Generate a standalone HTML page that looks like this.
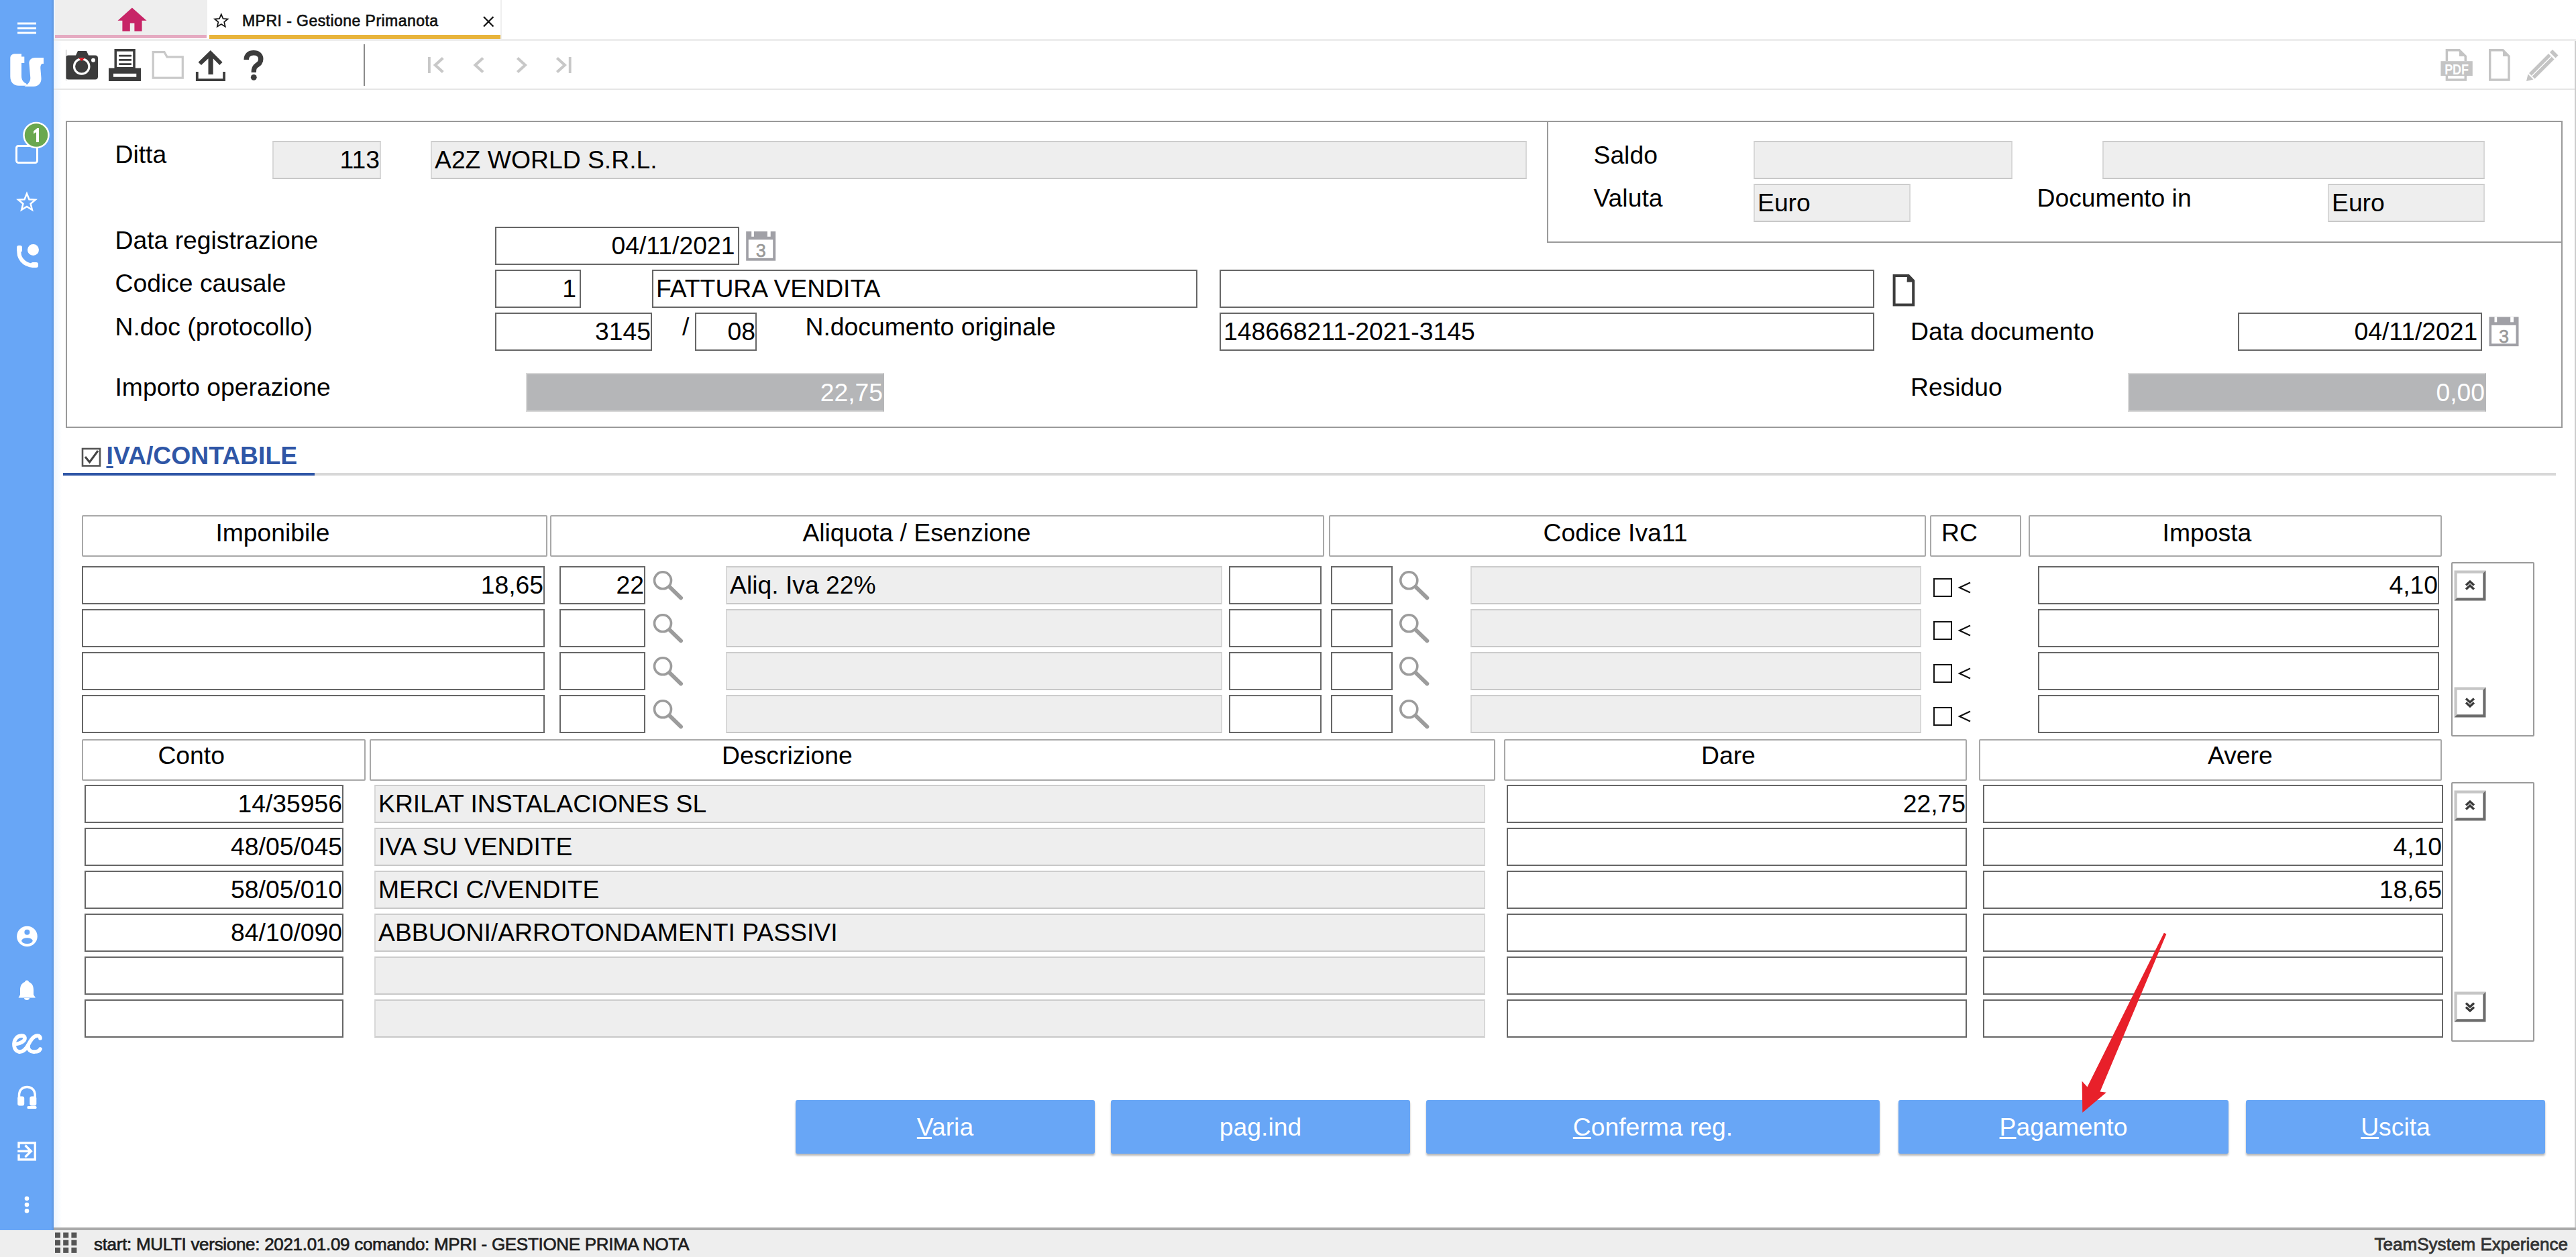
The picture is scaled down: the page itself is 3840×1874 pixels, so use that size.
<!DOCTYPE html><html><head><meta charset="utf-8"><style>
*{margin:0;padding:0;box-sizing:border-box}
html,body{width:3840px;height:1874px;overflow:hidden;background:#fff;font-family:"Liberation Sans",sans-serif;color:#000}
div{position:absolute}
.t{white-space:nowrap}
.fw{background:#fff;border:2px solid #666;font-size:37.3px;white-space:nowrap;overflow:visible}
.fg{background:#eeeeee;border:2px solid;border-color:#cccccc #d8d8d8 #c8c8c8 #d8d8d8;font-size:37.3px;white-space:nowrap}
.fd{background:#b5b6b8;border:2px solid #d6d6d6;border-right-color:#b5b6b8;font-size:37.3px;white-space:nowrap}
.hd{background:#fff;border:2px solid #a8a8a8;border-radius:2px}
.btn{background:#68a6f6;border-radius:3px;box-shadow:0 3px 3px rgba(0,0,0,.28);color:#fff;font-size:37.3px;text-align:center;line-height:80px}
svg{position:absolute;overflow:visible}
</style></head><body><div style="left:0;top:0;width:80px;height:1834px;background:#68a6f6"></div><div style="left:76px;top:0;width:4px;height:1834px;background:linear-gradient(to right,rgba(0,0,0,0),rgba(0,0,0,.10))"></div><div style="left:80px;top:0;width:12px;height:1834px;background:linear-gradient(to right,rgba(104,166,246,.12),rgba(104,166,246,0))"></div><div style="left:82px;top:0;width:227px;height:52px;background:#eeeeee"></div><div style="left:82px;top:52px;width:226px;height:5px;background:#e5aac1"></div><div style="left:312px;top:52px;width:434px;height:6px;background:#e8b43c"></div><div style="left:80px;top:58px;width:3760px;height:3px;background:#ededed"></div><div class="t" style="left:361px;top:17.53px;font-size:23px;line-height:26px;font-weight:400;color:#111;letter-spacing:0.45px;-webkit-text-stroke:0.65px #111">MPRI - Gestione Primanota</div><div style="left:746px;top:0;width:2px;height:58px;background:#efefef"></div><div style="left:80px;top:132px;width:3760px;height:2px;background:#e6e6e6"></div><div style="left:542px;top:66px;width:1.5px;height:62px;background:#8a8a8a"></div><div style="left:3838px;top:61px;width:2px;height:1770px;background:#cccccc"></div><div class="" style="left:98px;top:180px;width:3722px;height:458px;border:2px solid #9a9a9a"></div><div style="left:2306px;top:180px;width:2px;height:182px;background:#9a9a9a"></div><div style="left:2306px;top:360px;width:1514px;height:2px;background:#9a9a9a"></div><div class="t" style="left:171.5px;top:208.58px;font-size:37.3px;line-height:43px;font-weight:400;color:#000;">Ditta</div><div class="t" style="left:171.5px;top:337.08px;font-size:37.3px;line-height:43px;font-weight:400;color:#000;">Data registrazione</div><div class="t" style="left:171.5px;top:401.08px;font-size:37.3px;line-height:43px;font-weight:400;color:#000;">Codice causale</div><div class="t" style="left:171.5px;top:465.58px;font-size:37.3px;line-height:43px;font-weight:400;color:#000;">N.doc (protocollo)</div><div class="t" style="left:171.5px;top:555.58px;font-size:37.3px;line-height:43px;font-weight:400;color:#000;">Importo operazione</div><div class="t" style="left:2375.5px;top:209.58px;font-size:37.3px;line-height:43px;font-weight:400;color:#000;">Saldo</div><div class="t" style="left:2375.5px;top:273.58px;font-size:37.3px;line-height:43px;font-weight:400;color:#000;">Valuta</div><div class="t" style="left:3036.5px;top:273.58px;font-size:37.3px;line-height:43px;font-weight:400;color:#000;">Documento in</div><div class="t" style="left:1200.5px;top:465.58px;font-size:37.3px;line-height:43px;font-weight:400;color:#000;">N.documento originale</div><div class="t" style="left:2848px;top:473.08px;font-size:37.3px;line-height:43px;font-weight:400;color:#000;">Data documento</div><div class="t" style="left:2848px;top:555.58px;font-size:37.3px;line-height:43px;font-weight:400;color:#000;">Residuo</div><div class="t" style="left:1017px;top:465.58px;font-size:37.3px;line-height:43px;font-weight:400;color:#000;">/</div><div class="fg" style="left:406px;top:210px;width:162px;height:57px;"><span style="display:block;line-height:53px;text-align:right;padding:0 0px 0 0;color:#000">113</span></div><div class="fg" style="left:642px;top:210px;width:1634px;height:57px;"><span style="display:block;line-height:53px;text-align:left;padding:0 0 0 4px;color:#000">A2Z WORLD S.R.L.</span></div><div class="fg" style="left:2614px;top:210px;width:386px;height:57px;"></div><div class="fg" style="left:3134px;top:210px;width:570px;height:57px;"></div><div class="fg" style="left:2614px;top:274px;width:234px;height:57px;"><span style="display:block;line-height:53px;text-align:left;padding:0 0 0 4px;color:#000">Euro</span></div><div class="fg" style="left:3470px;top:274px;width:234px;height:57px;"><span style="display:block;line-height:53px;text-align:left;padding:0 0 0 4px;color:#000">Euro</span></div><div class="fw" style="left:738px;top:338px;width:364px;height:57px;"><span style="display:block;line-height:53px;text-align:right;padding:0 4.6px 0 0;color:#000">04/11/2021</span></div><div class="fw" style="left:738px;top:402px;width:128px;height:57px;"><span style="display:block;line-height:53px;text-align:right;padding:0 5px 0 0;color:#000">1</span></div><div class="fw" style="left:972px;top:402px;width:813px;height:57px;"><span style="display:block;line-height:53px;text-align:left;padding:0 0 0 4px;color:#000">FATTURA VENDITA</span></div><div class="fw" style="left:1818px;top:402px;width:976px;height:57px;"></div><div class="fw" style="left:738px;top:466px;width:234px;height:57px;"><span style="display:block;line-height:53px;text-align:right;padding:0 0px 0 0;color:#000">3145</span></div><div class="fw" style="left:1036px;top:466px;width:92px;height:57px;"><span style="display:block;line-height:53px;text-align:right;padding:0 0px 0 0;color:#000">08</span></div><div class="fw" style="left:1818px;top:466px;width:976px;height:57px;"><span style="display:block;line-height:53px;text-align:left;padding:0 0 0 4px;color:#000">148668211-2021-3145</span></div><div class="fw" style="left:3336px;top:466px;width:364px;height:57px;"><span style="display:block;line-height:53px;text-align:right;padding:0 4.7px 0 0;color:#000">04/11/2021</span></div><div class="fd" style="left:784px;top:556px;width:534px;height:58px;"><span style="display:block;line-height:54px;text-align:right;padding:0 0px 0 0;color:#fff">22,75</span></div><div class="fd" style="left:3172px;top:556px;width:534px;height:58px;"><span style="display:block;line-height:54px;text-align:right;padding:0 0px 0 0;color:#fff">0,00</span></div><div class="t" style="left:158.5px;top:657.58px;font-size:37.3px;line-height:43px;font-weight:700;color:#2f56a6;"><u style="text-decoration-thickness:3px;text-underline-offset:3px">I</u>VA/CONTABILE</div><div style="left:94px;top:705px;width:375px;height:4px;background:#2f56a6"></div><div style="left:469px;top:705px;width:3341px;height:4px;background:#d8d8d8"></div><div class="hd" style="left:122px;top:768px;width:694px;height:62px;"></div><div class="hd" style="left:820px;top:768px;width:1154px;height:62px;"></div><div class="hd" style="left:1981px;top:768px;width:890px;height:62px;"></div><div class="hd" style="left:2877px;top:768px;width:136px;height:62px;"></div><div class="hd" style="left:3024px;top:768px;width:616px;height:62px;"></div><div class="t" style="left:321.4px;top:772.58px;font-size:37.3px;line-height:43px;font-weight:400;color:#000;">Imponibile</div><div class="t" style="left:1196.4px;top:772.58px;font-size:37.3px;line-height:43px;font-weight:400;color:#000;">Aliquota / Esenzione</div><div class="t" style="left:2300.6px;top:772.58px;font-size:37.3px;line-height:43px;font-weight:400;color:#000;">Codice Iva11</div><div class="t" style="left:2894px;top:772.58px;font-size:37.3px;line-height:43px;font-weight:400;color:#000;">RC</div><div class="t" style="left:3223.6px;top:772.58px;font-size:37.3px;line-height:43px;font-weight:400;color:#000;">Imposta</div><div class="fw" style="left:122px;top:844px;width:690px;height:57px;"><span style="display:block;line-height:53px;text-align:right;padding:0 0px 0 0;color:#000">18,65</span></div><div class="fw" style="left:834px;top:844px;width:128px;height:57px;"><span style="display:block;line-height:53px;text-align:right;padding:0 0px 0 0;color:#000">22</span></div><div class="fg" style="left:1082px;top:844px;width:740px;height:57px;"><span style="display:block;line-height:53px;text-align:left;padding:0 0 0 4px;color:#000">Aliq. Iva 22%</span></div><div class="fw" style="left:1832px;top:844px;width:138px;height:57px;"></div><div class="fw" style="left:1984px;top:844px;width:92px;height:57px;"></div><div class="fg" style="left:2192px;top:844px;width:672px;height:57px;"></div><div class="fw" style="left:3038px;top:844px;width:598px;height:57px;"><span style="display:block;line-height:53px;text-align:right;padding:0 0px 0 0;color:#000">4,10</span></div><div class="" style="left:2882px;top:862px;width:28px;height:28px;border:2px solid #111;background:#fff"></div><div class="fw" style="left:122px;top:908px;width:690px;height:57px;"></div><div class="fw" style="left:834px;top:908px;width:128px;height:57px;"></div><div class="fg" style="left:1082px;top:908px;width:740px;height:57px;"></div><div class="fw" style="left:1832px;top:908px;width:138px;height:57px;"></div><div class="fw" style="left:1984px;top:908px;width:92px;height:57px;"></div><div class="fg" style="left:2192px;top:908px;width:672px;height:57px;"></div><div class="fw" style="left:3038px;top:908px;width:598px;height:57px;"></div><div class="" style="left:2882px;top:926px;width:28px;height:28px;border:2px solid #111;background:#fff"></div><div class="fw" style="left:122px;top:972px;width:690px;height:57px;"></div><div class="fw" style="left:834px;top:972px;width:128px;height:57px;"></div><div class="fg" style="left:1082px;top:972px;width:740px;height:57px;"></div><div class="fw" style="left:1832px;top:972px;width:138px;height:57px;"></div><div class="fw" style="left:1984px;top:972px;width:92px;height:57px;"></div><div class="fg" style="left:2192px;top:972px;width:672px;height:57px;"></div><div class="fw" style="left:3038px;top:972px;width:598px;height:57px;"></div><div class="" style="left:2882px;top:990px;width:28px;height:28px;border:2px solid #111;background:#fff"></div><div class="fw" style="left:122px;top:1036px;width:690px;height:57px;"></div><div class="fw" style="left:834px;top:1036px;width:128px;height:57px;"></div><div class="fg" style="left:1082px;top:1036px;width:740px;height:57px;"></div><div class="fw" style="left:1832px;top:1036px;width:138px;height:57px;"></div><div class="fw" style="left:1984px;top:1036px;width:92px;height:57px;"></div><div class="fg" style="left:2192px;top:1036px;width:672px;height:57px;"></div><div class="fw" style="left:3038px;top:1036px;width:598px;height:57px;"></div><div class="" style="left:2882px;top:1054px;width:28px;height:28px;border:2px solid #111;background:#fff"></div><div class="" style="left:3654px;top:838px;width:124px;height:260px;border:2px solid #9a9a9a;border-radius:2px"></div><div class="hd" style="left:122px;top:1102px;width:423px;height:62px;"></div><div class="hd" style="left:551px;top:1102px;width:1678px;height:62px;"></div><div class="hd" style="left:2242px;top:1102px;width:690px;height:62px;"></div><div class="hd" style="left:2950px;top:1102px;width:690px;height:62px;"></div><div class="t" style="left:235.4px;top:1104.58px;font-size:37.3px;line-height:43px;font-weight:400;color:#000;">Conto</div><div class="t" style="left:1076px;top:1104.58px;font-size:37.3px;line-height:43px;font-weight:400;color:#000;">Descrizione</div><div class="t" style="left:2536px;top:1104.58px;font-size:37.3px;line-height:43px;font-weight:400;color:#000;">Dare</div><div class="t" style="left:3291px;top:1104.58px;font-size:37.3px;line-height:43px;font-weight:400;color:#000;">Avere</div><div class="fw" style="left:126px;top:1170px;width:386px;height:57px;"><span style="display:block;line-height:53px;text-align:right;padding:0 0px 0 0;color:#000">14/35956</span></div><div class="fg" style="left:558px;top:1170px;width:1656px;height:57px;"><span style="display:block;line-height:53px;text-align:left;padding:0 0 0 4px;color:#000">KRILAT INSTALACIONES SL</span></div><div class="fw" style="left:2246px;top:1170px;width:686px;height:57px;"><span style="display:block;line-height:53px;text-align:right;padding:0 0px 0 0;color:#000">22,75</span></div><div class="fw" style="left:2956px;top:1170px;width:686px;height:57px;"></div><div class="fw" style="left:126px;top:1234px;width:386px;height:57px;"><span style="display:block;line-height:53px;text-align:right;padding:0 0px 0 0;color:#000">48/05/045</span></div><div class="fg" style="left:558px;top:1234px;width:1656px;height:57px;"><span style="display:block;line-height:53px;text-align:left;padding:0 0 0 4px;color:#000">IVA SU VENDITE</span></div><div class="fw" style="left:2246px;top:1234px;width:686px;height:57px;"></div><div class="fw" style="left:2956px;top:1234px;width:686px;height:57px;"><span style="display:block;line-height:53px;text-align:right;padding:0 0px 0 0;color:#000">4,10</span></div><div class="fw" style="left:126px;top:1298px;width:386px;height:57px;"><span style="display:block;line-height:53px;text-align:right;padding:0 0px 0 0;color:#000">58/05/010</span></div><div class="fg" style="left:558px;top:1298px;width:1656px;height:57px;"><span style="display:block;line-height:53px;text-align:left;padding:0 0 0 4px;color:#000">MERCI C/VENDITE</span></div><div class="fw" style="left:2246px;top:1298px;width:686px;height:57px;"></div><div class="fw" style="left:2956px;top:1298px;width:686px;height:57px;"><span style="display:block;line-height:53px;text-align:right;padding:0 0px 0 0;color:#000">18,65</span></div><div class="fw" style="left:126px;top:1362px;width:386px;height:57px;"><span style="display:block;line-height:53px;text-align:right;padding:0 0px 0 0;color:#000">84/10/090</span></div><div class="fg" style="left:558px;top:1362px;width:1656px;height:57px;"><span style="display:block;line-height:53px;text-align:left;padding:0 0 0 4px;color:#000">ABBUONI/ARROTONDAMENTI PASSIVI</span></div><div class="fw" style="left:2246px;top:1362px;width:686px;height:57px;"></div><div class="fw" style="left:2956px;top:1362px;width:686px;height:57px;"></div><div class="fw" style="left:126px;top:1426px;width:386px;height:57px;"></div><div class="fg" style="left:558px;top:1426px;width:1656px;height:57px;"></div><div class="fw" style="left:2246px;top:1426px;width:686px;height:57px;"></div><div class="fw" style="left:2956px;top:1426px;width:686px;height:57px;"></div><div class="fw" style="left:126px;top:1490px;width:386px;height:57px;"></div><div class="fg" style="left:558px;top:1490px;width:1656px;height:57px;"></div><div class="fw" style="left:2246px;top:1490px;width:686px;height:57px;"></div><div class="fw" style="left:2956px;top:1490px;width:686px;height:57px;"></div><div class="" style="left:3654px;top:1166px;width:124px;height:387px;border:2px solid #9a9a9a;border-radius:2px"></div><div class="btn" style="left:1186px;top:1640px;width:446px;height:80px;"><u>V</u>aria</div><div class="btn" style="left:1656px;top:1640px;width:446px;height:80px;">pag.ind</div><div class="btn" style="left:2126px;top:1640px;width:676px;height:80px;"><u>C</u>onferma reg.</div><div class="btn" style="left:2830px;top:1640px;width:492px;height:80px;"><u>P</u>agamento</div><div class="btn" style="left:3348px;top:1640px;width:446px;height:80px;"><u>U</u>scita</div><div style="left:0;top:1834px;width:3840px;height:40px;background:#eeeeee"></div><div style="left:80px;top:1830px;width:3760px;height:4px;background:#a9a9a9"></div><div class="t" style="left:140px;top:1840.49px;font-size:26px;line-height:30px;font-weight:400;color:#1e1e1e;letter-spacing:-0.3px;-webkit-text-stroke:0.7px #1e1e1e">start: MULTI versione: 2021.01.09 comando: MPRI - GESTIONE PRIMA NOTA</div><div class="t" style="left:1828px;width:2000px;text-align:right;top:1840.49px;font-size:26px;line-height:30px;font-weight:400;color:#333;letter-spacing:0.05px;-webkit-text-stroke:0.8px #333">TeamSystem Experience</div><svg width="3840" height="1874" style="left:0;top:0;position:absolute"><rect x="26" y="33.5" width="28" height="3" fill="#ffffff"/><rect x="26" y="40.5" width="28" height="3" fill="#ffffff"/><rect x="26" y="47.5" width="28" height="3" fill="#ffffff"/><path fill="#fff" d="M15.3 87 C15.3 82.5 18 80.3 22.5 80.3 L32 80.3 L32 84.5 L36.3 84.5 L36.3 94 L32 94 L32 113 C32 119 34.5 122.5 39 124.5 L40.5 127.8 L28 127.8 C20 127.8 15.3 122 15.3 114 Z"/><path fill="#fff" d="M43.4 94 C43.4 89 47 86 52.5 86 L65 86 L65 95 L62.5 95 C60.8 96.5 60.2 98.5 60.3 101.5 L61.5 116.5 C62 124 57 129 50 129 L36.5 129 C41.5 126 45.5 121.5 45.3 116 Z"/><rect x="24.5" y="217.5" width="31" height="25" rx="3" fill="none" stroke="#ffffff" stroke-width="3"/><circle cx="54" cy="201.5" r="18.5" fill="#6aa84f" stroke="#fff" stroke-width="2.5"/><path d="M50 195.5 L55.5 191 L58 191 L58 212 L54 212 L54 197 L50 199.5 Z" fill="#fff"/><polygon points="40.00,288.60 43.47,297.23 52.74,297.86 45.61,303.82 47.88,312.84 40.00,307.90 32.12,312.84 34.39,303.82 27.26,297.86 36.53,297.23" fill="none" stroke="#ffffff" stroke-width="2.5" stroke-linejoin="miter"/><path fill="none" stroke="#fff" stroke-width="6" stroke-linecap="round" d="M29 371 C26 384 35 395 50 396"/><rect x="25" y="366" width="8" height="10" rx="3" fill="#fff"/><rect x="46" y="391" width="11" height="8" rx="3" fill="#fff"/><circle cx="49.5" cy="372.5" r="8.5" fill="#fff"/><circle cx="40.4" cy="1396" r="15.3" fill="#fff"/><circle cx="40.4" cy="1389.8" r="4" fill="#68a6f6"/><ellipse cx="40.4" cy="1402.6" rx="8.3" ry="4.4" fill="#68a6f6"/><path fill="#fff" d="M40 1461.5 C42 1461.5 43 1463 43 1464 C48 1466 50 1470 50 1476 L50 1483 L53 1487.5 L27.5 1487.5 L30 1483 L30 1476 C30 1470 32 1466 37 1464 C37 1463 38 1461.5 40 1461.5 Z"/><path fill="#fff" d="M36 1488 L44 1488 C44 1490 42 1491 40 1491 C38 1491 36 1490 36 1488 Z"/><path fill="none" stroke="#fff" stroke-width="5.6" stroke-linecap="round" d="M22 1557 C30 1556 38 1552 37 1547 C36 1543 28 1543 24 1548 C19 1554 20 1566 28 1568 C34 1569 38 1565 42 1558 C46 1550 50 1544 56 1544 C59 1544 60 1546 60 1548"/><path fill="none" stroke="#fff" stroke-width="5.6" stroke-linecap="round" d="M42 1558 C41 1565 46 1569 52 1568 C56 1568 59 1566 60 1564"/><path fill="none" stroke="#fff" stroke-width="3.5" d="M28.5 1638 L28.5 1633 C28.5 1625 33.5 1620.5 40.3 1620.5 C47 1620.5 52.2 1625 52.2 1633 L52.2 1638"/><rect x="26.2" y="1634.5" width="10" height="14" rx="3" fill="#fff"/><rect x="44.3" y="1634.5" width="10" height="14" rx="3" fill="#fff"/><rect x="40.5" y="1649" width="14" height="4" rx="1.5" fill="#fff"/><path fill="none" stroke="#fff" stroke-width="3.4" d="M28 1711.5 L28 1704 L52.3 1704 L52.3 1728.7 L28 1728.7 L28 1721"/><path fill="none" stroke="#fff" stroke-width="3.4" d="M26.2 1716.3 L46 1716.3 M37.5 1707.5 L46.3 1716.3 L37.5 1725"/><circle cx="40" cy="1786.8" r="3.3" fill="#fff"/><circle cx="40" cy="1796" r="3.3" fill="#fff"/><circle cx="40" cy="1805.2" r="3.3" fill="#fff"/><path fill="#c72567" d="M196.9 11.5 L218.6 30.7 L211.6 30.7 L211.6 46.6 L200.4 46.6 L200.4 34.5 L193.8 34.5 L193.8 46.6 L182.4 46.6 L182.4 30.7 L175.5 30.7 Z"/><polygon points="329.80,21.30 332.50,27.78 339.50,28.35 334.17,32.92 335.80,39.75 329.80,36.10 323.80,39.75 325.43,32.92 320.10,28.35 327.10,27.78" fill="none" stroke="#111" stroke-width="1.7" stroke-linejoin="miter"/><path stroke="#111" stroke-width="2.2" d="M721 25 L735.5 39.5 M735.5 25 L721 39.5"/><path fill="#3c3c3c" d="M113 82.5 L116 76 L129 76 L132 82.5 L142 82.5 C144.5 82.5 146 84 146 86.5 L146 114.5 C146 117 144.5 118.5 142 118.5 L102 118.5 C99.5 118.5 98 117 98 114.5 L98 86.5 C98 84 99.5 82.5 102 82.5 Z"/><circle cx="121.7" cy="99" r="11.2" fill="none" stroke="#fff" stroke-width="3.2"/><circle cx="139" cy="89.8" r="3" fill="#fff"/><path d="M117 86.5 L121.7 91 L126.5 86.5 Z" fill="#e0141e"/><rect x="98" y="74" width="0.8" height="46" fill="#999"/><rect x="172.3" y="74.8" width="27.7" height="27" fill="#fff" stroke="#3c3c3c" stroke-width="3.6"/><path stroke="#3c3c3c" stroke-width="2.8" stroke-linecap="round" d="M178.3 83.2 L194.9 83.2 M178.3 89.4 L194.9 89.4 M178.3 95.6 L194.9 95.6"/><path fill="#3c3c3c" fill-rule="evenodd" d="M162 101.6 L210 101.6 L210 121 L162 121 Z M169 109.7 L203.3 109.7 L203.3 114.7 L169 114.7 Z"/><path fill="none" stroke="#c9c9c9" stroke-width="3.2" d="M228.2 116.2 L228.2 77.6 L245 77.6 L249 84.8 L272.3 84.8 L272.3 116.2 Z"/><path fill="#3c3c3c" d="M313.8 75 L331.6 92.8 L327.4 97 L317.7 87.3 L317.7 111 L310.5 111 L310.5 87.3 L300 97 L295.6 92.8 Z"/><path fill="none" stroke="#3c3c3c" stroke-width="3.8" d="M293.8 107 L293.8 119.1 L334.1 119.1 L334.1 107"/><path fill="none" stroke="#3c3c3c" stroke-width="7.4" d="M367.2 89 C367.2 81.5 372 78.8 378 78.8 C384.5 78.8 388.8 82 388.8 88 C388.8 93.5 385.5 95.5 382 98 C379.2 100 378.3 102 378.3 108"/><circle cx="378.3" cy="115.3" r="4.4" fill="#3c3c3c"/><rect x="638" y="85" width="3.8" height="24" fill="#c8c8c8"/><path fill="none" stroke="#c8c8c8" stroke-width="4.2" d="M660.3 86.5 L648.8 97 L660.3 107.5"/><path fill="none" stroke="#c8c8c8" stroke-width="4.2" d="M720 86.5 L708.5 97 L720 107.5"/><path fill="none" stroke="#c8c8c8" stroke-width="4.2" d="M771.4 86.5 L782.9 97 L771.4 107.5"/><path fill="none" stroke="#c8c8c8" stroke-width="4.2" d="M830.4 86.5 L841.9 97 L830.4 107.5"/><rect x="847.8" y="85" width="3.8" height="24" fill="#c8c8c8"/><path fill="none" stroke="#c4c4c4" stroke-width="3.5" d="M3647.4 91 L3647.4 74.8 L3666 74.8 L3675.3 84 L3675.3 91 M3647.4 113 L3647.4 119 L3675.3 119 L3675.3 113"/><path fill="#c4c4c4" d="M3666 74.8 L3675.3 84 L3666 84 Z"/><rect x="3638.4" y="91.2" width="47.4" height="21.8" fill="#c4c4c4"/><text x="3662" y="111" font-family="Liberation Sans" font-weight="700" font-size="22" fill="#fff" text-anchor="middle" letter-spacing="-0.3" transform="translate(3662 0) scale(0.82 1) translate(-3662 0)">PDF</text><path fill="none" stroke="#c4c4c4" stroke-width="3.4" d="M3711.7 119 L3711.7 74.8 L3731 74.8 L3740 84 L3740 119 Z"/><path fill="#c4c4c4" d="M3731 74.8 L3740 84 L3731 84 Z"/><path fill="#c4c4c4" d="M3805 74 L3813.5 82.5 L3809.5 86.5 L3801 78 Z"/><path fill="#c4c4c4" d="M3799 80 L3807.5 88.5 L3778.5 117.5 L3770 109 Z"/><path stroke="#fff" stroke-width="1.4" d="M3803.2 84.2 L3774.2 113.2"/><path fill="#c4c4c4" d="M3768.5 110.5 L3776.5 118.5 L3766 121 Z"/><rect x="1112.2" y="345" width="44" height="43.7" fill="#a0a0a6"/><rect x="1115.8" y="357.3" width="36.4" height="27.5" fill="#fff"/><rect x="1120.2" y="345" width="3.7" height="7.8" fill="#fff"/><rect x="1143.9" y="345" width="4.8" height="7.8" fill="#fff"/><text x="1134.2" y="383" font-family="Liberation Sans" font-size="27" fill="#999" stroke="#999" stroke-width="0.6" text-anchor="middle">3</text><rect x="3710.5" y="472.5" width="44" height="43.7" fill="#a0a0a6"/><rect x="3714.1" y="484.8" width="36.4" height="27.5" fill="#fff"/><rect x="3718.5" y="472.5" width="3.7" height="7.8" fill="#fff"/><rect x="3742.2" y="472.5" width="4.8" height="7.8" fill="#fff"/><text x="3732.5" y="510.5" font-family="Liberation Sans" font-size="27" fill="#999" stroke="#999" stroke-width="0.6" text-anchor="middle">3</text><path fill="none" stroke="#3c3c3c" stroke-width="4" d="M2823.6 454.6 L2823.6 411 L2845 411 L2852.2 418.5 L2852.2 454.6 Z"/><path fill="#3c3c3c" d="M2843 409 L2854.2 420.4 L2842.6 420.4 Z"/><circle cx="988" cy="865.3" r="12.5" fill="none" stroke="#9c9c9c" stroke-width="3.6"/><path stroke="#9c9c9c" stroke-width="6" stroke-linecap="round" d="M998 874.8 L1015 891.3"/><circle cx="2100.3" cy="865.3" r="12.5" fill="none" stroke="#9c9c9c" stroke-width="3.6"/><path stroke="#9c9c9c" stroke-width="6" stroke-linecap="round" d="M2110.3 874.8 L2127.3 891.3"/><path fill="none" stroke="#111" stroke-width="2.2" d="M2937 868.5 L2921 876 L2937 883.5"/><circle cx="988" cy="929.3" r="12.5" fill="none" stroke="#9c9c9c" stroke-width="3.6"/><path stroke="#9c9c9c" stroke-width="6" stroke-linecap="round" d="M998 938.8 L1015 955.3"/><circle cx="2100.3" cy="929.3" r="12.5" fill="none" stroke="#9c9c9c" stroke-width="3.6"/><path stroke="#9c9c9c" stroke-width="6" stroke-linecap="round" d="M2110.3 938.8 L2127.3 955.3"/><path fill="none" stroke="#111" stroke-width="2.2" d="M2937 932.5 L2921 940 L2937 947.5"/><circle cx="988" cy="993.3" r="12.5" fill="none" stroke="#9c9c9c" stroke-width="3.6"/><path stroke="#9c9c9c" stroke-width="6" stroke-linecap="round" d="M998 1002.8 L1015 1019.3"/><circle cx="2100.3" cy="993.3" r="12.5" fill="none" stroke="#9c9c9c" stroke-width="3.6"/><path stroke="#9c9c9c" stroke-width="6" stroke-linecap="round" d="M2110.3 1002.8 L2127.3 1019.3"/><path fill="none" stroke="#111" stroke-width="2.2" d="M2937 996.5 L2921 1004 L2937 1011.5"/><circle cx="988" cy="1057.3" r="12.5" fill="none" stroke="#9c9c9c" stroke-width="3.6"/><path stroke="#9c9c9c" stroke-width="6" stroke-linecap="round" d="M998 1066.8 L1015 1083.3"/><circle cx="2100.3" cy="1057.3" r="12.5" fill="none" stroke="#9c9c9c" stroke-width="3.6"/><path stroke="#9c9c9c" stroke-width="6" stroke-linecap="round" d="M2110.3 1066.8 L2127.3 1083.3"/><path fill="none" stroke="#111" stroke-width="2.2" d="M2937 1060.5 L2921 1068 L2937 1075.5"/><rect x="3658.5" y="850.5" width="47" height="45" fill="#fff"/><polygon fill="#c6c6c6" points="3658.5,850.5 3705.5,850.5 3701.3,854.7 3662.7,854.7 3662.7,891.3 3658.5,895.5"/><polygon fill="#6c6c6c" points="3705.5,850.5 3705.5,895.5 3658.5,895.5 3662.7,891.3 3701.3,891.3 3701.3,854.7"/><path fill="none" stroke="#3a3a3a" stroke-width="3.4" d="M3676.0 872.5 L3682.0 867.0 L3688.0 872.5 M3676.0 878.5 L3682.0 873.0 L3688.0 878.5"/><rect x="3658.5" y="1024.5" width="47" height="45" fill="#fff"/><polygon fill="#c6c6c6" points="3658.5,1024.5 3705.5,1024.5 3701.3,1028.7 3662.7,1028.7 3662.7,1065.3 3658.5,1069.5"/><polygon fill="#6c6c6c" points="3705.5,1024.5 3705.5,1069.5 3658.5,1069.5 3662.7,1065.3 3701.3,1065.3 3701.3,1028.7"/><path fill="none" stroke="#3a3a3a" stroke-width="3.4" d="M3676.0 1041.5 L3682.0 1047.0 L3688.0 1041.5 M3676.0 1047.5 L3682.0 1053.0 L3688.0 1047.5"/><rect x="3658.5" y="1178.5" width="47" height="45" fill="#fff"/><polygon fill="#c6c6c6" points="3658.5,1178.5 3705.5,1178.5 3701.3,1182.7 3662.7,1182.7 3662.7,1219.3 3658.5,1223.5"/><polygon fill="#6c6c6c" points="3705.5,1178.5 3705.5,1223.5 3658.5,1223.5 3662.7,1219.3 3701.3,1219.3 3701.3,1182.7"/><path fill="none" stroke="#3a3a3a" stroke-width="3.4" d="M3676.0 1200.5 L3682.0 1195.0 L3688.0 1200.5 M3676.0 1206.5 L3682.0 1201.0 L3688.0 1206.5"/><rect x="3658.5" y="1478.5" width="47" height="45" fill="#fff"/><polygon fill="#c6c6c6" points="3658.5,1478.5 3705.5,1478.5 3701.3,1482.7 3662.7,1482.7 3662.7,1519.3 3658.5,1523.5"/><polygon fill="#6c6c6c" points="3705.5,1478.5 3705.5,1523.5 3658.5,1523.5 3662.7,1519.3 3701.3,1519.3 3701.3,1482.7"/><path fill="none" stroke="#3a3a3a" stroke-width="3.4" d="M3676.0 1495.5 L3682.0 1501.0 L3688.0 1495.5 M3676.0 1501.5 L3682.0 1507.0 L3688.0 1501.5"/><rect x="123" y="669" width="26" height="25.5" fill="#fff" stroke="#555" stroke-width="2.6"/><path fill="none" stroke="#444" stroke-width="3" d="M127 681 L133.5 689 L146 672"/><rect x="82.0" y="1837.5" width="8" height="8" fill="#555"/><rect x="94.2" y="1837.5" width="8" height="8" fill="#555"/><rect x="106.4" y="1837.5" width="8" height="8" fill="#555"/><rect x="82.0" y="1848.7" width="8" height="8" fill="#555"/><rect x="94.2" y="1848.7" width="8" height="8" fill="#555"/><rect x="106.4" y="1848.7" width="8" height="8" fill="#555"/><rect x="82.0" y="1859.9" width="8" height="8" fill="#555"/><rect x="94.2" y="1859.9" width="8" height="8" fill="#555"/><rect x="106.4" y="1859.9" width="8" height="8" fill="#555"/><path fill="#e8202a" d="M3225.8 1390.8 L3229.4 1392.4 L3130.5 1627.6 L3139.8 1628.8 L3104.3 1658.8 L3103.6 1611.8 L3111.5 1620.5 Z"/></svg></body></html>
